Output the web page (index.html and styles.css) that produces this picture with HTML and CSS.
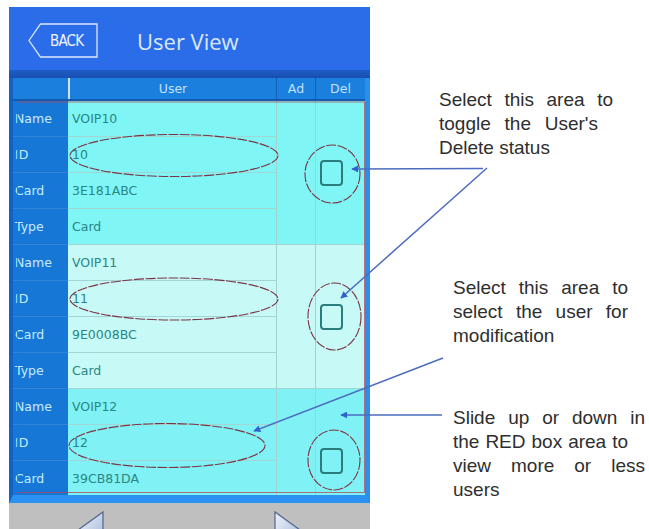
FILE: index.html
```html
<!DOCTYPE html>
<html>
<head>
<meta charset="utf-8">
<link rel="stylesheet" href="styles.css">
</head>
<body>
<div class="page">
  <div class="phone">
    <header class="topbar">
      <div class="back">
        <svg class="back-shape" width="70" height="35" viewBox="0 0 70 35"><polygon points="1,17.5 12.5,1 69,1 69,34 12.5,34" fill="none" stroke="#dfe8ff" stroke-width="1.3"/></svg>
        <span class="back-text">BACK</span>
      </div>
      <h1 class="title">User View</h1>
    </header>
    <div class="band"></div>
    <div class="table">
      <div class="thead">
        <div class="th th-label"></div>
        <div class="th th-user">User</div>
        <div class="th th-ad">Ad</div>
        <div class="th th-del">Del</div>
      </div>
      <div class="tbody">
        <div class="group g1">
          <div class="labels">
            <div class="lab">Name</div><div class="lab">ID</div><div class="lab">Card</div><div class="lab">Type</div>
          </div>
          <div class="values">
            <div class="val">VOIP10</div><div class="val">10</div><div class="val">3E181ABC</div><div class="val">Card</div>
          </div>
          <div class="ad"></div>
          <div class="del"><span class="chk"></span></div>
        </div>
        <div class="group g2">
          <div class="labels">
            <div class="lab">Name</div><div class="lab">ID</div><div class="lab">Card</div><div class="lab">Type</div>
          </div>
          <div class="values">
            <div class="val">VOIP11</div><div class="val">11</div><div class="val">9E0008BC</div><div class="val">Card</div>
          </div>
          <div class="ad"></div>
          <div class="del"><span class="chk"></span></div>
        </div>
        <div class="group g3">
          <div class="labels">
            <div class="lab">Name</div><div class="lab">ID</div><div class="lab">Card</div><div class="lab"></div>
          </div>
          <div class="values">
            <div class="val">VOIP12</div><div class="val">12</div><div class="val">39CB81DA</div><div class="val"></div>
          </div>
          <div class="ad"></div>
          <div class="del"><span class="chk"></span></div>
        </div>
      </div>
    </div>
    <div class="footer">
      <svg width="361" height="26" viewBox="0 0 361 26">
        <defs>
          <linearGradient id="tri" x1="0" y1="0" x2="1" y2="1">
            <stop offset="0" stop-color="#eef3fb"/>
            <stop offset="1" stop-color="#9fb4d8"/>
          </linearGradient>
        </defs>
        <polygon points="94,9 94,45 69,27" fill="url(#tri)" stroke="#55648c" stroke-width="1.2"/>
        <polygon points="266,9 266,45 291,27" fill="url(#tri)" stroke="#55648c" stroke-width="1.2"/>
      </svg>
    </div>
  </div>

  <div class="notes">
    <div class="note n1">
      <span class="ln jl w174">Select this area to</span>
      <span class="ln jl w159">toggle the User's</span>
      <span class="ln">Delete status</span>
    </div>
    <div class="note n2">
      <span class="ln jl w175">Select this area to</span>
      <span class="ln jl w175">select the user for</span>
      <span class="ln">modification</span>
    </div>
    <div class="note n3">
      <span class="ln jl w192">Slide up or down in</span>
      <span class="ln jl w175">the RED box area to</span>
      <span class="ln jl w192">view more or less</span>
      <span class="ln">users</span>
    </div>
  </div>

  <svg class="overlay" width="649" height="529" viewBox="0 0 649 529">
    <defs>
      <marker id="ah" viewBox="0 0 10 10" refX="9" refY="5" markerWidth="7" markerHeight="7" orient="auto-start-reverse" markerUnits="userSpaceOnUse">
        <path d="M0,0 L10,5 L0,10 z" fill="#2f5fd0"/>
      </marker>
    </defs>
    <rect x="17.5" y="102" width="347" height="390.5" fill="none" stroke="#b04455" stroke-width="1" opacity="0.75"/>
    <g fill="none" stroke="#7d3343" stroke-width="1.1" stroke-dasharray="10 1.5">
      <ellipse cx="174" cy="155.5" rx="104" ry="21"/>
      <ellipse cx="174" cy="299" rx="104" ry="21"/>
      <ellipse cx="167" cy="445.5" rx="98" ry="22"/>
      <ellipse cx="332.5" cy="174" rx="27.5" ry="29"/>
      <ellipse cx="334.5" cy="316.5" rx="26.5" ry="33.5"/>
      <ellipse cx="334" cy="460" rx="26" ry="30"/>
    </g>
    <g stroke="#4d6bbf" stroke-width="1.5" fill="none">
      <line x1="483" y1="168.5" x2="352" y2="169" marker-end="url(#ah)"/>
      <line x1="487" y1="168" x2="341" y2="298" marker-end="url(#ah)"/>
      <line x1="443" y1="358" x2="254" y2="431" marker-end="url(#ah)"/>
      <line x1="442" y1="415" x2="341" y2="415" marker-end="url(#ah)"/>
    </g>
  </svg>
</div>
</body>
</html>
```

FILE: styles.css
```css
* { box-sizing: border-box; }

body {
  margin: 0;
  background: #ffffff;
}

.page {
  position: relative;
  width: 649px;
  height: 529px;
  overflow: hidden;
  display: flex;
  align-items: flex-start;
}

.phone {
  flex: none;
  width: 361px;
  margin: 7px 0 0 9px;
  display: flex;
  flex-direction: column;
}

.topbar {
  height: 63px;
  background: #2b6de8;
  display: flex;
  align-items: center;
  padding: 4px 0 0 19px;
  margin: 0;
}

.back {
  position: relative;
  width: 70px;
  height: 35px;
  flex: none;
  display: flex;
  align-items: center;
  padding-left: 22px;
}

.back-shape {
  position: absolute;
  left: 0;
  top: 0;
}

.back-text {
  position: relative;
  font-family: "DejaVu Sans Condensed", "DejaVu Sans", sans-serif;
  font-stretch: condensed;
  font-size: 15px;
  letter-spacing: -0.8px;
  color: #eef3ff;
}

.title {
  margin: 0 0 0 39px;
  font-family: "Open Sans", "Noto Sans", sans-serif;
  font-weight: normal;
  font-size: 22px;
  line-height: 30px;
  color: #dbe7ff;
}

.band {
  height: 8px;
  background: linear-gradient(#1d5cc6, #1a50b0);
}

.table {
  border-left: 4px solid #1262c6;
  border-right: 5px solid #2a8ef0;
  border-bottom: 8px solid #2c92f2;
}

.thead {
  display: grid;
  grid-template-columns: 57px 206px 39px 50px;
  height: 23px;
  background: #1a7fdd;
  border-bottom: 2px solid #155aae;
  font-family: "DejaVu Sans", sans-serif;
  font-size: 12.5px;
  color: #c4e0ff;
}

.th {
  display: flex;
  align-items: center;
  justify-content: center;
}

.th-label {
  border-right: 2px solid #cfe3ff;
}

.th-ad,
.th-del {
  border-left: 1px solid #1560b2;
}

.tbody {
  height: 394px;
  overflow: hidden;
}

.group {
  display: grid;
  grid-template-columns: 55px 208px 39px 50px;
  height: 144px;
}

.g1 { background: #80f5f5; }
.g2 { background: #c7f9f7; }
.g3 { background: #80f2f5; }

.labels {
  background: #1677d6;
  display: flex;
  flex-direction: column;
}

.lab {
  height: 36px;
  display: flex;
  align-items: center;
  padding-left: 2px;
  border-bottom: 1px solid rgba(200, 230, 255, 0.14);
  font-family: "DejaVu Sans", sans-serif;
  font-size: 12.5px;
  color: #c6ecff;
}

.values {
  display: flex;
  flex-direction: column;
}

.val {
  height: 36px;
  display: flex;
  align-items: center;
  padding-left: 4px;
  border-bottom: 1px solid #a3d6d2;
  font-family: "DejaVu Sans", sans-serif;
  font-size: 12.5px;
  color: #2b8683;
}

.ad,
.del {
  border-left: 1px solid #a0d2d2;
  border-bottom: 1px solid #a3d6d2;
}

.del {
  display: flex;
  align-items: center;
  padding-left: 4px;
}

.chk {
  width: 23px;
  height: 26px;
  border: 2px solid #2b7c7c;
  border-radius: 4px;
}

.footer {
  height: 26px;
  background: #bfbfbf;
  overflow: hidden;
}

.footer svg {
  display: block;
}

.notes {
  flex: none;
  margin-left: 69px;
  padding-top: 88px;
  display: flex;
  flex-direction: column;
  font-family: "Liberation Sans", Arial, sans-serif;
  font-size: 19px;
  line-height: 24px;
  color: #2e2e2e;
}

.n2 { margin: 116px 0 0 14px; }
.n3 { margin: 58px 0 0 14px; }

.ln {
  display: block;
  white-space: nowrap;
}

.jl {
  white-space: normal;
  text-align: justify;
  text-align-last: justify;
}

.w159 { width: 159px; }
.w174 { width: 174px; }
.w175 { width: 175px; }
.w192 { width: 192px; }

.overlay {
  position: absolute;
  left: 0;
  top: 0;
  pointer-events: none;
}
```
